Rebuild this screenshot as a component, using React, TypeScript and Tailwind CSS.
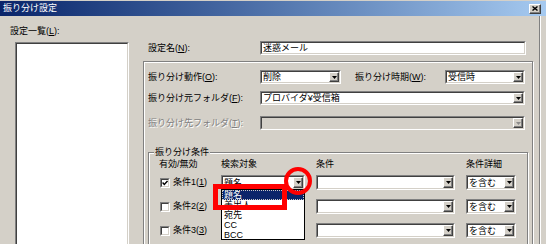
import React from "react";

function Arrow({ disabled }: { disabled?: boolean }) {
  return (
    <div className="flex h-full w-[10px] shrink-0 items-center justify-center border border-t-white border-l-white border-r-[#404040] border-b-[#404040] bg-[#d4d0c8] shadow-[inset_-1px_-1px_0_#808080]">
      <svg width="5" height="3" viewBox="0 0 5 3">
        <path d="M0 0H5L2.5 3Z" fill={disabled ? "#8a8a8a" : "#000"} />
      </svg>
    </div>
  );
}

function Field({
  className,
  disabled,
  children,
}: {
  className: string;
  disabled?: boolean;
  children?: React.ReactNode;
}) {
  return (
    <div
      className={`${className} shrink-0 border border-t-[#808080] border-l-[#808080] border-r-white border-b-white`}
    >
      <div
        className={`flex h-full items-center overflow-hidden border border-t-[#404040] border-l-[#404040] border-r-[#d4d0c8] border-b-[#d4d0c8] ${
          disabled ? "bg-[#d4d0c8]" : "bg-white"
        }`}
      >
        {children}
      </div>
    </div>
  );
}

function Select({
  className,
  text,
  disabled,
}: {
  className: string;
  text?: string;
  disabled?: boolean;
}) {
  return (
    <Field className={className} disabled={disabled}>
      <span className="flex-1 truncate pl-[1px] leading-[10px]">{text}</span>
      <Arrow disabled={disabled} />
    </Field>
  );
}

function Check({ checked }: { checked?: boolean }) {
  return (
    <div className="h-[10px] w-[10px] shrink-0 border border-t-[#808080] border-l-[#808080] border-r-white border-b-white">
      <div className="flex h-full w-full items-center justify-center border border-t-[#404040] border-l-[#404040] border-r-[#d4d0c8] border-b-[#d4d0c8] bg-white">
        {checked && (
          <svg width="6" height="6" viewBox="0 0 6 6">
            <path d="M0.6 2.6L2.3 4.4L5.5 0.9" fill="none" stroke="#000" strokeWidth="1.4" />
          </svg>
        )}
      </div>
    </div>
  );
}

function U({ c }: { c: string }) {
  return <span className="underline underline-offset-1">{c}</span>;
}

function CondRow({ n, checked, first }: { n: string; checked?: boolean; first?: boolean }) {
  return (
    <div className={`flex h-[15px] items-center ${first ? "mt-[5px]" : "mt-[9px]"}`}>
      <div className="flex w-[62px] items-center pl-[1px]">
        <Check checked={checked} />
        <span className="ml-[3px]">
          条件{n}(<U c={n} />)
        </span>
      </div>
      <div className="relative h-full w-[95px]">
        <Select className="h-[15px] w-[84px]" text={first ? "題名" : ""} />
        {first && (
          <>
            <div className="absolute left-0 top-[14px] z-10 flex h-[51px] w-[84px] flex-col border border-black bg-white leading-[10px]">
              <div className="h-[10px] bg-[#0a246a] pl-[2px] text-white outline outline-1 outline-dotted outline-[#c8c8c8] -outline-offset-1">題名</div>
              <div className="h-[10px] pl-[2px]">差出人</div>
              <div className="h-[10px] pl-[2px]">宛先</div>
              <div className="h-[10px] pl-[2px]">CC</div>
              <div className="h-[10px] pl-[2px]">BCC</div>
            </div>
            <div className="absolute left-[-8px] top-[9px] z-20 h-[26px] w-[74px] border-[5px] border-[#ff0000]" />
            <div className="absolute left-[63px] top-[-8px] z-30 h-[28px] w-[28px] rounded-full border-[4px] border-[#ff0000]" />
          </>
        )}
      </div>
      <div className="w-[150px]">
        <Select className="h-[15px] w-[139px]" />
      </div>
      <Select className="h-[15px] w-[50px]" text="を含む" />
    </div>
  );
}

export default function App() {
  return (
    <div className="flex h-[244px] w-[546px] flex-col overflow-hidden bg-[#d4d0c8] text-[9px] leading-[11px] text-black [font-family:'Liberation_Sans','Noto_Sans_CJK_JP',sans-serif]">
      {/* title bar */}
      <div className="mt-[1px] flex h-[15px] shrink-0 items-center justify-between bg-linear-to-r from-[#0a246a] to-[#a6caf0] pl-[3px] pr-[5px]">
        <span className="text-white">振り分け設定</span>
        <div className="flex h-[10px] w-[12px] items-center justify-center border border-t-white border-l-white border-r-[#404040] border-b-[#404040] bg-[#d4d0c8] shadow-[inset_-1px_-1px_0_#808080]">
          <svg width="6" height="5" viewBox="0 0 6 5">
            <path d="M0.5 0.5L5.5 4.5M5.5 0.5L0.5 4.5" stroke="#000" strokeWidth="1.4" />
          </svg>
        </div>
      </div>

      {/* body */}
      <div className="flex flex-1">
        {/* left column */}
        <div className="flex w-[143px] shrink-0 flex-col pl-[10px] pt-[10px]">
          <span>
            設定一覧(<U c="L" />):
          </span>
          <Field className="ml-[5px] mt-[5px] h-[300px] w-[114px]" />
        </div>

        {/* right column */}
        <div className="flex w-[390px] shrink-0 flex-col">
          <div className="mt-[25px] flex h-[14px] items-center">
            <span className="w-[117px] pl-[5px]">
              設定名(<U c="N" />):
            </span>
            <Field className="h-[14px] w-[266px]">
              <span className="pl-[1px] leading-[10px]">迷惑メール</span>
            </Field>
          </div>

          {/* frame */}
          <div className="mt-[6px] h-[200px] w-[390px] border border-[#808080] pl-[4px] pt-[8px] shadow-[inset_1px_1px_0_#fff,1px_1px_0_#fff]">
            <div className="flex h-[14px] items-center">
              <span className="w-[112px] shrink-0">
                振り分け動作(<U c="O" />):
              </span>
              <Select className="h-[14px] w-[81px]" text="削除" />
              <span className="ml-[14px] w-[90px] shrink-0">
                振り分け時期(<U c="W" />):
              </span>
              <Select className="h-[14px] w-[80px]" text="受信時" />
            </div>
            <div className="mt-[7px] flex h-[14px] items-center">
              <span className="w-[112px] shrink-0">
                振り分け元フォルダ(<U c="F" />):
              </span>
              <Select className="h-[14px] w-[265px]" text="プロバイダ¥受信箱" />
            </div>
            <div className="mt-[11px] flex h-[14px] items-center">
              <span className="w-[112px] shrink-0 text-[#808080] [text-shadow:1px_1px_0_#fff]">
                振り分け先フォルダ(<U c="T" />):
              </span>
              <Select className="h-[14px] w-[265px]" disabled />
            </div>

            {/* conditions group */}
            <div className="relative mt-[22px] h-[120px] w-[380px] border border-[#808080] pl-[10px] pt-[6px] shadow-[inset_1px_1px_0_#fff,1px_1px_0_#fff]">
              <span className="absolute -top-[6px] left-[5px] bg-[#d4d0c8] px-[1px]">振り分け条件</span>
              <div className="flex h-[11px] items-center">
                <span className="w-[62px]">有効/無効</span>
                <span className="w-[95px]">検索対象</span>
                <span className="w-[150px]">条件</span>
                <span>条件詳細</span>
              </div>
              <CondRow n="1" checked first />
              <CondRow n="2" />
              <CondRow n="3" />
            </div>
          </div>
        </div>

        <div className="ml-[6px] w-[1px] bg-[#808080]" />
        <div className="w-[1px] bg-white" />
      </div>
    </div>
  );
}
